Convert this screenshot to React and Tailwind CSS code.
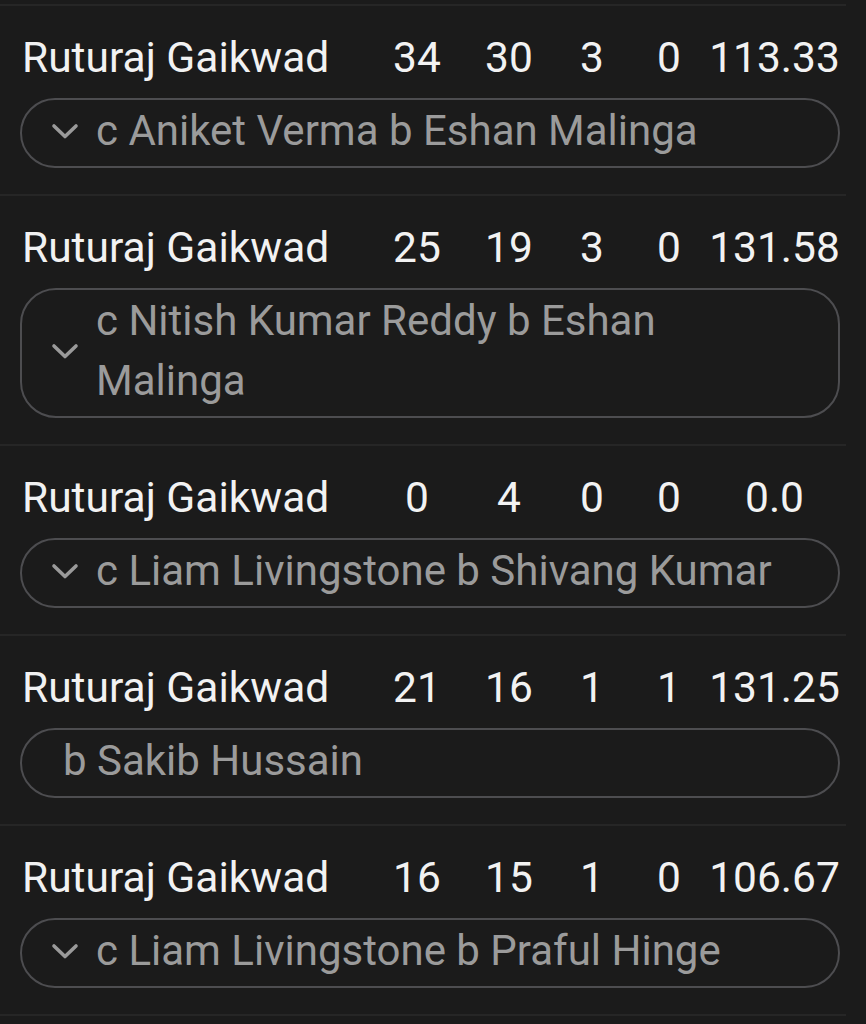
import React from "react";

const rows = [
  { name: "Ruturaj Gaikwad", r: "34", b: "30", f: "3", s: "0", sr: "113.33", d: "c Aniket Verma b Eshan Malinga", chev: true },
  { name: "Ruturaj Gaikwad", r: "25", b: "19", f: "3", s: "0", sr: "131.58", d: "c Nitish Kumar Reddy b Eshan Malinga", chev: true },
  { name: "Ruturaj Gaikwad", r: "0", b: "4", f: "0", s: "0", sr: "0.0", d: "c Liam Livingstone b Shivang Kumar", chev: true },
  { name: "Ruturaj Gaikwad", r: "21", b: "16", f: "1", s: "1", sr: "131.25", d: "b Sakib Hussain", chev: false },
  { name: "Ruturaj Gaikwad", r: "16", b: "15", f: "1", s: "0", sr: "106.67", d: "c Liam Livingstone b Praful Hinge", chev: true },
];

function Chevron() {
  return (
    <svg width="28" height="18" viewBox="0 0 28 18" className="shrink-0">
      <polyline points="3,4 14,14.5 25,4" fill="none" stroke="#9a9a9a" strokeWidth="3.6" strokeLinecap="round" strokeLinejoin="round" />
    </svg>
  );
}

function Row({ row }) {
  return (
    <div className="w-[846px] border-t-2 border-[#262626] pl-[20px] pr-[6px] pt-[22px] pb-[26px]">
      <div className="flex h-[60px] items-center text-[42.5px] leading-[60px] text-[#f2f2f2]">
        <div className="flex-1 pl-[2px]">{row.name}</div>
        <div className="w-[92px] text-center">{row.r}</div>
        <div className="w-[92px] text-center">{row.b}</div>
        <div className="w-[74px] text-center">{row.f}</div>
        <div className="w-[80px] text-center">{row.s}</div>
        <div className="w-[131px] text-center">{row.sr}</div>
      </div>
      <div
        className={
          row.chev
            ? "mt-[10px] flex items-center gap-[17px] rounded-[36px] border-2 border-[#4d4d50] pl-[29px] pr-[30px] pt-[1px] pb-[5px]"
            : "mt-[10px] flex items-center gap-[17px] rounded-[36px] border-2 border-[#4d4d50] pl-[41px] pr-[30px] pt-[1px] pb-[5px]"
        }
      >
        {row.chev && <Chevron />}
        <div className="text-[42px] leading-[60px] text-[#9b9b9b]">{row.d}</div>
      </div>
    </div>
  );
}

export default function App() {
  return (
    <div className="min-h-screen bg-[#1b1b1b] pt-[4px]" style={{ fontFamily: "Roboto, 'Noto Sans', sans-serif" }}>
      {rows.map((row, i) => (
        <Row key={i} row={row} />
      ))}
      <div className="w-[846px] border-t-2 border-[#262626]" />
    </div>
  );
}
